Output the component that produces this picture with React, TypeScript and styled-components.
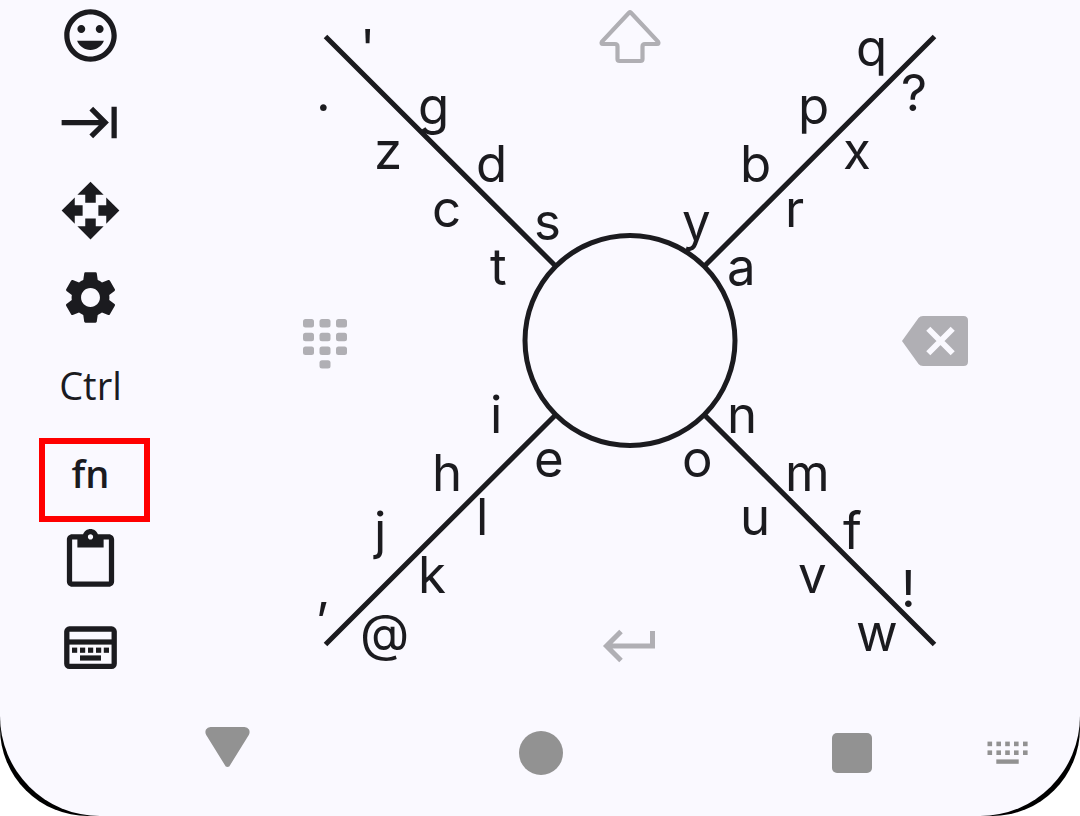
import React from "react";
import styled, { createGlobalStyle, css } from "styled-components";
import {
  MdContentPaste,
  MdInsertEmoticon,
  MdKeyboardTab,
  MdOpenWith,
  MdSettings,
} from "react-icons/md";

const INK = "#1b1b1f";
const MUTED = "#b0afb4";
const NAV = "#929292";
const SURFACE = "#faf9ff";

const GlobalStyle = createGlobalStyle`
  *, *::before, *::after { box-sizing: border-box; }
  body { margin: 0; background: #ffffff; font-family: Inter, sans-serif; }
  svg { display: block; }
`;

const Screen = styled.div`
  background: #000000;
  border-radius: 0 0 88px 88px;
`;

const Panel = styled.main`
  background: ${SURFACE};
  border-radius: 0 0 100px 100px;
  color: ${INK};
`;

const Keyboard = styled.div`
  display: flex;
`;

const Sidebar = styled.aside`
  flex: none;
  width: 180px;
  padding: 4px 0 2px 59px;
  display: flex;
  flex-direction: column;
  align-items: flex-start;
  justify-content: space-between;
`;

const plainButton = css`
  margin: 0;
  padding: 0;
  border: 0;
  background: none;
  color: inherit;
`;

const SideButton = styled.button`
  ${plainButton}
  position: relative;
  width: 63px;
  height: 63px;
  display: flex;
  align-items: center;
  justify-content: center;
`;

const KeyText = styled.span<{ $heavy?: boolean }>`
  font-family: "Open Sans", sans-serif;
  font-size: 38px;
  line-height: 56px;
  font-weight: ${(p) => (p.$heavy ? 600 : 400)};
`;

const Highlight = styled.span`
  position: absolute;
  left: -20px;
  top: -3px;
  width: 111px;
  height: 84px;
  border: 6px solid #ff0000;
`;

const Canvas = styled.section`
  position: relative;
  flex: 1;
  min-width: 0;
`;

const Dial = styled.svg`
  width: 100%;
  height: auto;
  fill: none;
  stroke: ${INK};
  stroke-width: 5;

  text {
    fill: ${INK};
    stroke: none;
    font-family: Inter, sans-serif;
    font-size: 51px;
  }
`;

const SectorButton = styled.button<{ $x: number; $y: number }>`
  ${plainButton}
  position: absolute;
  left: ${(p) => (p.$x / 900) * 100}%;
  top: ${(p) => (p.$y / 681) * 100}%;
  transform: translate(-50%, -50%);
  color: ${MUTED};
`;

const NavBar = styled.nav`
  height: 135px;
  padding: 9px 52px 0 205px;
  display: flex;
  align-items: center;
  color: ${NAV};
`;

const NavGroup = styled.div`
  flex: 1;
  display: flex;
  justify-content: space-between;
  margin-right: 115px;
`;

const NavButton = styled.button`
  ${plainButton}
`;

type Arm = { letters: string; x: number; y: number; dx: number; dy: number };

// Each arm of the dial carries two runs of letters, listed from the hub outwards.
const arms: Arm[] = [
  { letters: "sdg'", x: 354, y: 240, dx: -58, dy: -58 },
  { letters: "tcz.", x: 310, y: 285, dx: -58, dy: -58 },
  { letters: "ybpq", x: 502, y: 240, dx: 58, dy: -58 },
  { letters: "arx?", x: 547, y: 285, dx: 58, dy: -58 },
  { letters: "ihj,", x: 310, y: 433, dx: -58, dy: 58 },
  { letters: "elk@", x: 354, y: 477, dx: -58, dy: 58 },
  { letters: "nmf!", x: 547, y: 433, dx: 58, dy: 58 },
  { letters: "ouvw", x: 502, y: 477, dx: 58, dy: 58 },
];

const KeyboardIcon = () => (
  <svg width="63" height="63" viewBox="0 0 63 63" fill="currentColor">
    <rect x="7.8" y="13" width="47.4" height="37.4" rx="2.6" fill="none" stroke="currentColor" strokeWidth="5.3" />
    <rect x="7" y="23.4" width="49" height="5.2" />
    {[13, 21, 29, 37, 44.8].map((x) => (
      <rect key={x} x={x} y="31.6" width="5.2" height="5.2" />
    ))}
    <rect x="21" y="39.4" width="21" height="5.2" />
  </svg>
);

const ShiftIcon = () => (
  <svg width="64" height="56" viewBox="0 0 64 56" fill="none" stroke="currentColor" strokeWidth="4.2" strokeLinejoin="round">
    <path d="M31 4.7Q32 3.8 33 4.7L60 33.6Q61.300 36 59 36H47Q44.500 36 44.500 38.500V51Q44.500 53 42.500 53H21.500Q19.500 53 19.500 51V38.500Q19.500 36 17 36H5Q2.700 36 4 33.600Z" />
  </svg>
);

const BackspaceIcon = () => (
  <svg width="66" height="50" viewBox="0 0 66 50">
    <path fill="currentColor" d="M16.500 2Q18 0 21 0H61.500Q66 0 66 4.500V45.500Q66 50 61.500 50H21Q18 50 16.500 48L0 25Z" />
    <path stroke={SURFACE} strokeWidth="5.8" d="M26.300 12.800 50.700 37.200M50.700 12.800 26.300 37.200" />
  </svg>
);

const NumpadIcon = () => (
  <svg width="44" height="50" viewBox="0 0 44 50" fill="currentColor">
    {[0, 13.8, 27.6].map((y) =>
      [0, 16.5, 33].map((x) => <rect key={`${x}-${y}`} x={x} y={y} width="11" height="8.4" rx="2.5" />)
    )}
    <rect x="16.5" y="41.2" width="11" height="8.4" rx="2.5" />
  </svg>
);

const EnterIcon = () => (
  <svg width="54" height="34" viewBox="0 0 54 34" fill="none" stroke="currentColor" strokeWidth="5">
    <path d="M50.500 2V17H5M19 2.500 4.500 17 19 31.500" />
  </svg>
);

const NavKeyboardIcon = () => (
  <svg width="41" height="52" viewBox="0 0 41 52" fill="currentColor">
    {[14.6, 23.4].map((y) =>
      [0.5, 9.4, 18.2, 27, 36].map((x) => <rect key={`${x}-${y}`} x={x} y={y} width="4.6" height="4.6" />)
    )}
    <rect x="9.3" y="32.4" width="22.4" height="4.4" />
  </svg>
);

export default function App() {
  return (
    <Screen>
      <GlobalStyle />
      <Panel>
        <Keyboard>
          <Sidebar>
            <SideButton aria-label="Emoji"><MdInsertEmoticon size={63} /></SideButton>
            <SideButton aria-label="Tab"><MdKeyboardTab size={63} /></SideButton>
            <SideButton aria-label="Move"><MdOpenWith size={63} /></SideButton>
            <SideButton aria-label="Settings"><MdSettings size={63} /></SideButton>
            <SideButton><KeyText>Ctrl</KeyText></SideButton>
            <SideButton><KeyText $heavy>fn</KeyText><Highlight /></SideButton>
            <SideButton aria-label="Clipboard"><MdContentPaste size={63} /></SideButton>
            <SideButton aria-label="Switch keyboard"><KeyboardIcon /></SideButton>
          </Sidebar>
          <Canvas>
            <Dial viewBox="0 0 900 681">
              <circle cx="450" cy="340.5" r="105" />
              <path d="M145.500 36.500 375.500 266M754.500 36.500 524.500 266M145.500 644.500 375.500 415M754.500 644.500 524.500 415" />
              {arms.map((arm) =>
                [...arm.letters].map((letter, i) => (
                  <text key={letter} x={arm.x + arm.dx * i} y={arm.y + arm.dy * i}>{letter}</text>
                ))
              )}
            </Dial>
            <SectorButton $x={450} $y={36} aria-label="Shift"><ShiftIcon /></SectorButton>
            <SectorButton $x={145} $y={344} aria-label="Numbers"><NumpadIcon /></SectorButton>
            <SectorButton $x={755} $y={341} aria-label="Backspace"><BackspaceIcon /></SectorButton>
            <SectorButton $x={449} $y={646} aria-label="Enter"><EnterIcon /></SectorButton>
          </Canvas>
        </Keyboard>
        <NavBar>
          <NavGroup>
            <NavButton aria-label="Back">
              <svg width="45" height="52" viewBox="0 0 45 52" fill="currentColor">
                <path d="M5.500 0H39.500Q42.500 0 44 2.500 45.300 5 43.800 8L25.500 37.500Q24.500 40 22.500 40T19.500 37.500L1.200 8Q-.300 5 1 2.500 2.500 0 5.500 0Z" />
              </svg>
            </NavButton>
            <NavButton aria-label="Home">
              <svg width="44" height="52" viewBox="0 0 44 52" fill="currentColor">
                <circle cx="22" cy="26" r="22" />
              </svg>
            </NavButton>
            <NavButton aria-label="Recent apps">
              <svg width="40" height="52" viewBox="0 0 40 52" fill="currentColor">
                <rect y="6" width="40" height="40" rx="5" />
              </svg>
            </NavButton>
          </NavGroup>
          <NavButton aria-label="Choose input method"><NavKeyboardIcon /></NavButton>
        </NavBar>
      </Panel>
    </Screen>
  );
}
